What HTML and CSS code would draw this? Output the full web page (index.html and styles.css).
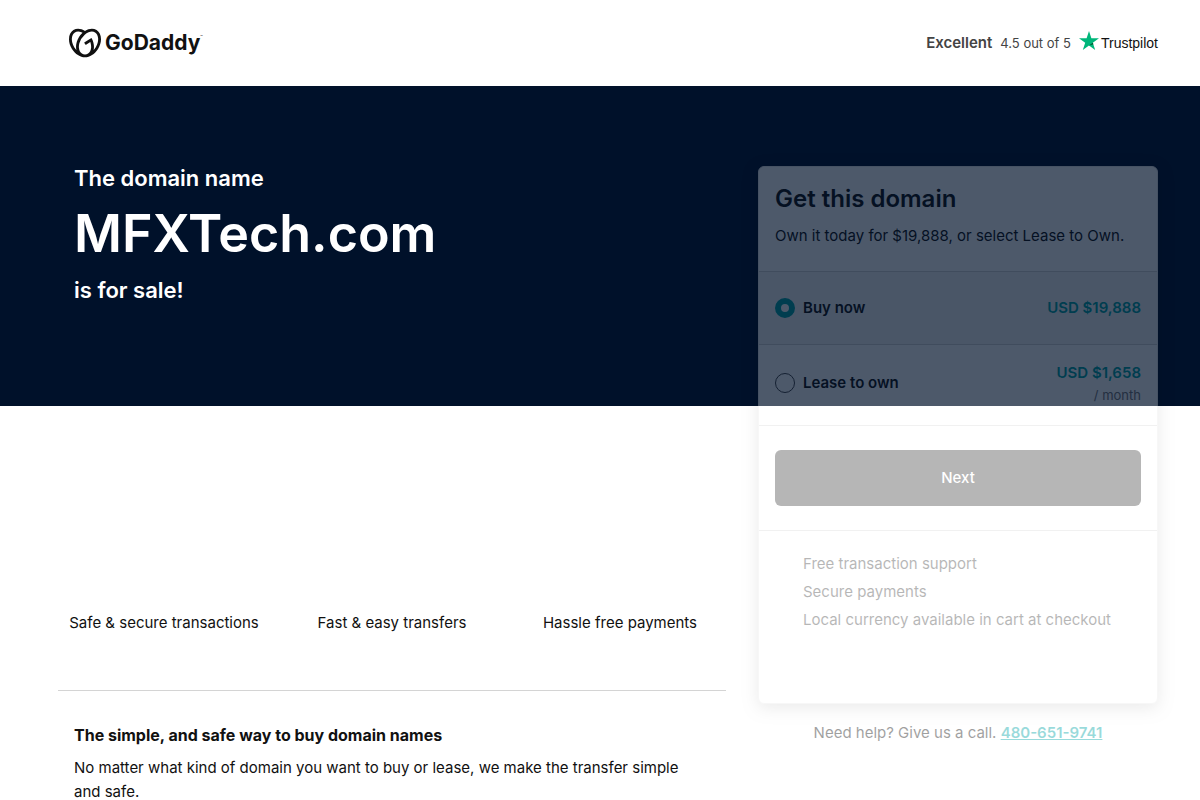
FILE: index.html
```html
<!DOCTYPE html>
<html lang="en">
<head>
  <meta charset="UTF-8">
  <meta name="viewport" content="width=device-width, initial-scale=1">
  <title>MFXTech.com is for sale</title>
  <link rel="stylesheet" href="styles.css">
</head>
<body>
  <header class="header">
    <a class="logo" href="#">
      <svg class="logo-mark" viewBox="0 0 24 24" aria-hidden="true">
        <path d="M20.702 2.29c-2.494-1.554-5.778-1.187-8.706.654C9.076 1.104 5.79.736 3.3 2.29c-3.941 2.463-4.42 8.806-1.07 14.167 2.47 3.954 6.333 6.269 9.77 6.226 3.439.043 7.301-2.273 9.771-6.226 3.347-5.361 2.872-11.704-1.069-14.167zM4.042 15.328a12.838 12.838 0 01-1.546-3.541 10.12 10.12 0 01-.336-3.338c.15-1.98.956-3.524 2.27-4.345 1.315-.822 3.052-.87 4.903-.137.281.113.556.24.825.382A15.11 15.11 0 007.5 7.54c-2.035 3.255-2.655 6.878-1.945 9.765a13.247 13.247 0 01-1.514-1.98zm17.465-3.541a12.866 12.866 0 01-1.547 3.54 13.25 13.25 0 01-1.513 1.984c.635-2.589.203-5.76-1.353-8.734a.39.39 0 00-.563-.153l-4.852 3.032a.397.397 0 00-.126.546l.712 1.139a.395.395 0 00.547.126l3.145-1.965c.101.306.203.606.28.916.296 1.086.41 2.214.335 3.337-.15 1.982-.956 3.525-2.27 4.347a4.437 4.437 0 01-2.25.65h-.101a4.432 4.432 0 01-2.25-.65c-1.314-.822-2.121-2.365-2.27-4.347-.074-1.123.039-2.251.335-3.337a13.212 13.212 0 014.05-6.482 10.148 10.148 0 012.849-1.765c1.845-.733 3.586-.685 4.9.137 1.316.822 2.122 2.365 2.271 4.345a10.146 10.146 0 01-.33 3.334z"/>
      </svg>
      <span class="logo-text">GoDaddy</span>
      <span class="logo-tm">™</span>
    </a>
    <div class="rating">
      <strong class="rating-word">Excellent</strong>
      <span class="rating-score">4.5 out of 5</span>
      <a class="trustpilot" href="#">
        <svg class="star" viewBox="0 0 20 19" aria-hidden="true">
          <path fill="#00b67a" d="M10 0l2.4 7.2H20l-6.2 4.5 2.4 7.3L10 14.5 3.8 19l2.4-7.3L0 7.2h7.6z"/>
          <path fill="#005128" d="M14.4 13.3l-.6-1.6L10 14.5z"/>
        </svg>
        <span>Trustpilot</span>
      </a>
    </div>
  </header>

  <main class="main">
    <div class="content">
      <h1 class="hero">
        <span class="hero-line">The domain name</span>
        <span class="hero-domain">MFXTech.com</span>
        <span class="hero-line">is for sale!</span>
      </h1>

      <ul class="features">
        <li>Safe &amp; secure transactions</li>
        <li>Fast &amp; easy transfers</li>
        <li>Hassle free payments</li>
      </ul>

      <section class="about">
        <h2>The simple, and safe way to buy domain names</h2>
        <p>No matter what kind of domain you want to buy or lease, we make the transfer simple and safe.</p>
      </section>
    </div>

    <aside class="sidebar">
      <form class="card">
        <div class="card-head">
          <h2>Get this domain</h2>
          <p>Own it today for $19,888, or select Lease to Own.</p>
        </div>
        <div class="option option-selected">
          <input type="radio" name="plan" id="buy" checked>
          <label for="buy">Buy now</label>
          <div class="price">USD $19,888</div>
        </div>
        <div class="option">
          <input type="radio" name="plan" id="lease">
          <label for="lease">Lease to own</label>
          <div class="price">USD $1,658 <small>/ month</small></div>
        </div>
        <div class="card-action">
          <button type="button">Next</button>
        </div>
        <ul class="perks">
          <li>Free transaction support</li>
          <li>Secure payments</li>
          <li>Local currency available in cart at checkout</li>
        </ul>
      </form>
      <p class="help">Need help? Give us a call. <a href="tel:480-651-9741">480-651-9741</a></p>
    </aside>
  </main>
</body>
</html>
```

FILE: styles.css
```css
* {
  box-sizing: border-box;
}

body {
  margin: 0;
  font-family: Inter, "Liberation Sans", sans-serif;
  font-size: 15px;
  line-height: 24px;
  color: #111;
  background-color: #fff;
}

h1, h2, p, ul {
  margin: 0;
  padding: 0;
}

ul {
  list-style: none;
}

.header {
  display: flex;
  align-items: center;
  justify-content: space-between;
  height: 86px;
  padding: 0 42px 0 69px;
}

.logo {
  display: flex;
  align-items: center;
  color: #111;
  text-decoration: none;
}

.logo-mark {
  width: 32px;
  height: 32px;
  margin-right: 4px;
  fill: #111;
}

.logo-text {
  font-size: 21px;
  font-weight: 700;
}

.logo-tm {
  margin-bottom: 12px;
  font-size: 4px;
  line-height: 4px;
}

.rating {
  display: flex;
  align-items: center;
  gap: 8px;
  color: #444;
}

.rating-word {
  font-weight: 600;
}

.rating-score {
  font-size: 13px;
}

.trustpilot {
  display: flex;
  align-items: center;
  gap: 2px;
  font-family: "Liberation Sans", sans-serif;
  font-size: 14px;
  color: #111;
  text-decoration: none;
}

.star {
  width: 20px;
  height: 19px;
  margin-bottom: 6px;
}

/* dark band behind the hero text and the top of the card */
.main {
  display: grid;
  grid-template-columns: 1fr 400px;
  gap: 32px;
  padding: 80px 42px 0 58px;
  background: linear-gradient(#00112a, #00112a) no-repeat top / 100% 320px;
}

.hero {
  display: flex;
  flex-direction: column;
  height: 240px;
  padding-left: 16px;
  font-weight: 600;
  color: #fff;
}

.hero-line {
  font-size: 22px;
  line-height: 24px;
}

.hero-domain {
  font-size: 52px;
  line-height: 88px;
}

.features {
  display: grid;
  grid-template-columns: repeat(3, 1fr);
  margin: 0 -8px;
  padding: 205px 0 55px;
  text-align: center;
}

.about {
  padding: 32px 40px 0 16px;
  border-top: 1px solid #d4d4d4;
}

.about h2 {
  margin-bottom: 9px;
  font-size: 16px;
  font-weight: 700;
}

.card {
  border: 1px solid #e8e8e8;
  border-radius: 6px;
  background-color: #fff;
  box-shadow: 0 4px 16px rgba(0, 0, 0, 0.25);
  opacity: 0.3;
}

.card-head {
  padding: 16px 16px 23px;
}

.card-head h2 {
  margin-bottom: 9px;
  font-size: 24px;
  font-weight: 600;
  line-height: 32px;
}

.option {
  display: flex;
  align-items: center;
  gap: 8px;
  padding: 16px 16px 20px;
  border-top: 1px solid #d4d4d4;
}

.option-selected {
  padding: 24px 16px;
  background-color: #f5f5f5;
}

.option input {
  appearance: none;
  width: 20px;
  height: 20px;
  margin: 0;
  border: 1px solid #444;
  border-radius: 50%;
  background-color: #fff;
}

.option input:checked {
  border: 6px solid #00a4a6;
}

.option label {
  font-weight: 600;
}

.price {
  margin-left: auto;
  font-weight: 600;
  text-align: right;
  color: #00a4a6;
}

.price small {
  display: block;
  font-size: 13px;
  font-weight: 400;
  line-height: 20px;
  color: #767676;
}

.card-action {
  padding: 24px 16px;
  border-top: 1px solid #d4d4d4;
}

.card-action button {
  width: 100%;
  height: 56px;
  border: none;
  border-radius: 6px;
  font: inherit;
  font-weight: 500;
  color: #fff;
  background-color: #111;
  cursor: pointer;
}

.perks {
  padding: 19px 44px 69px;
  border-top: 1px solid #d4d4d4;
  line-height: 28px;
}

.help {
  padding-top: 17px;
  text-align: center;
  opacity: 0.4;
}

.help a {
  font-weight: 600;
  color: #00a4a6;
}
```
